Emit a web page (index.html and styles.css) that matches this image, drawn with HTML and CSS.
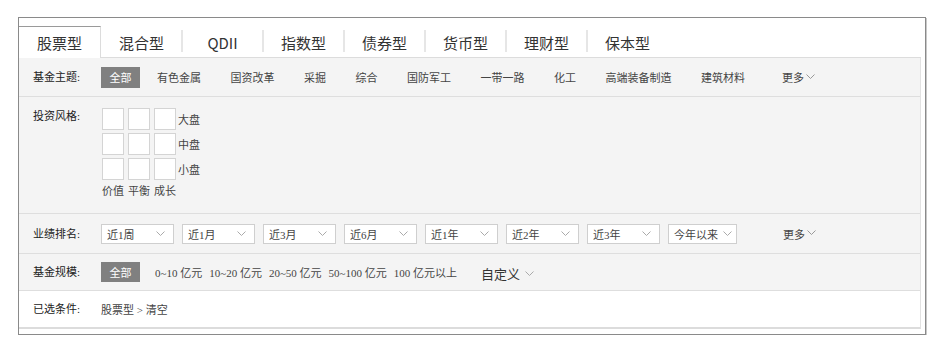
FILE: index.html
```html
<!DOCTYPE html>
<html lang="zh-CN">
<head>
<meta charset="utf-8">
<title>基金筛选</title>
<link rel="stylesheet" href="styles.css">
</head>
<body>
<div class="frame">
  <div class="tabs">
    <div class="tab active">股票型</div>
    <div class="tab">混合型</div>
    <div class="tab sep">QDII</div>
    <div class="tab sep">指数型</div>
    <div class="tab sep">债券型</div>
    <div class="tab sep">货币型</div>
    <div class="tab sep">理财型</div>
    <div class="tab sep">保本型</div>
    <div class="tab-fill"></div>
  </div>
  <div class="panel">
    <div class="row row-theme">
      <div class="label">基金主题:</div>
      <div class="opts">
        <span class="badge">全部</span>
        <span class="opt">有色金属</span>
        <span class="opt">国资改革</span>
        <span class="opt">采掘</span>
        <span class="opt">综合</span>
        <span class="opt">国防军工</span>
        <span class="opt">一带一路</span>
        <span class="opt">化工</span>
        <span class="opt">高端装备制造</span>
        <span class="opt">建筑材料</span>
        <span class="opt more">更多<svg class="chev" viewBox="0 0 9 5" width="9" height="5"><polyline points="0.5,0.5 4.5,4.5 8.5,0.5" fill="none" stroke="#999"/></svg></span>
      </div>
    </div>
    <div class="row row-style">
      <div class="label">投资风格:</div>
      <div class="style-grid">
        <span class="cell"></span><span class="cell"></span><span class="cell"></span><span class="cap">大盘</span>
        <span class="cell"></span><span class="cell"></span><span class="cell"></span><span class="cap">中盘</span>
        <span class="cell"></span><span class="cell"></span><span class="cell"></span><span class="cap">小盘</span>
        <span class="foot">价值</span><span class="foot">平衡</span><span class="foot">成长</span>
      </div>
    </div>
    <div class="row row-rank">
      <div class="label">业绩排名:</div>
      <div class="opts">
        <span class="select">近1周<svg class="chev" viewBox="0 0 9 5" width="9" height="5"><polyline points="0.5,0.5 4.5,4.5 8.5,0.5" fill="none" stroke="#aaa"/></svg></span>
        <span class="select">近1月<svg class="chev" viewBox="0 0 9 5" width="9" height="5"><polyline points="0.5,0.5 4.5,4.5 8.5,0.5" fill="none" stroke="#aaa"/></svg></span>
        <span class="select">近3月<svg class="chev" viewBox="0 0 9 5" width="9" height="5"><polyline points="0.5,0.5 4.5,4.5 8.5,0.5" fill="none" stroke="#aaa"/></svg></span>
        <span class="select">近6月<svg class="chev" viewBox="0 0 9 5" width="9" height="5"><polyline points="0.5,0.5 4.5,4.5 8.5,0.5" fill="none" stroke="#aaa"/></svg></span>
        <span class="select">近1年<svg class="chev" viewBox="0 0 9 5" width="9" height="5"><polyline points="0.5,0.5 4.5,4.5 8.5,0.5" fill="none" stroke="#aaa"/></svg></span>
        <span class="select">近2年<svg class="chev" viewBox="0 0 9 5" width="9" height="5"><polyline points="0.5,0.5 4.5,4.5 8.5,0.5" fill="none" stroke="#aaa"/></svg></span>
        <span class="select">近3年<svg class="chev" viewBox="0 0 9 5" width="9" height="5"><polyline points="0.5,0.5 4.5,4.5 8.5,0.5" fill="none" stroke="#aaa"/></svg></span>
        <span class="select narrow">今年以来<svg class="chev" viewBox="0 0 9 5" width="9" height="5"><polyline points="0.5,0.5 4.5,4.5 8.5,0.5" fill="none" stroke="#aaa"/></svg></span>
        <span class="rank-more">更多<svg class="chev" viewBox="0 0 9 5" width="9" height="5"><polyline points="0.5,0.5 4.5,4.5 8.5,0.5" fill="none" stroke="#999"/></svg></span>
      </div>
    </div>
    <div class="row row-size">
      <div class="label">基金规模:</div>
      <div class="opts">
        <span class="badge badge-size">全部</span>
        <span class="size-opt">0~10 亿元</span>
        <span class="size-opt">10~20 亿元</span>
        <span class="size-opt">20~50 亿元</span>
        <span class="size-opt">50~100 亿元</span>
        <span class="size-opt">100 亿元以上</span>
        <span class="custom">自定义<svg class="chev" viewBox="0 0 9 5" width="9" height="5"><polyline points="0.5,0.5 4.5,4.5 8.5,0.5" fill="none" stroke="#aaa"/></svg></span>
      </div>
    </div>
    <div class="row row-sel">
      <div class="label">已选条件:</div>
      <div class="opts sel">股票型 &gt; 清空</div>
    </div>
  </div>
</div>
</body>
</html>
```

FILE: styles.css
```css
* { box-sizing: border-box; }

body {
  margin: 0;
  background: #fff;
  font-family: "Liberation Serif", "Noto Sans CJK SC", serif;
  color: #333;
}

.frame {
  margin: 17px 0 0 18px;
  width: 908px;
  height: 318px;
  border: 1px solid #8a8a8a;
  box-shadow: 1px 1px 0 #c8c8c8;
  background: #fff;
}

.tabs {
  display: flex;
  width: 902px;
  height: 40px;
  padding-top: 8px;
}

.tab {
  position: relative;
  width: 81px;
  flex: none;
  display: flex;
  align-items: center;
  justify-content: center;
  padding-top: 2px;
  font-family: "Noto Sans CJK SC", sans-serif;
  font-size: 15px;
  color: #333;
  border-bottom: 1px solid #dcdcdc;
}

.tab.active {
  width: 82px;
  border-bottom: 0;
  border-top: 1px solid #9a9a9a;
  border-right: 1px solid #dcdcdc;
  padding-top: 0;
}

.tab.sep::before {
  content: "";
  position: absolute;
  left: -1px;
  top: 4px;
  bottom: 5px;
  width: 2px;
  background: #e6e6e6;
}

.tab-fill {
  flex: 1;
  border-bottom: 1px solid #dcdcdc;
}

.panel {
  width: 902px;
  border-right: 1px solid #e2e2e2;
  border-bottom: 2px solid #dcdcdc;
}

.row {
  display: flex;
  align-items: center;
  padding-left: 14px;
  background: #f4f4f4;
  border-bottom: 1px solid #dedede;
}

.row-theme { height: 39px; }
.row-style { height: 117px; align-items: flex-start; padding-top: 11px; }
.row-rank { height: 40px; }
.row-size { height: 37px; }
.row-sel { height: 36px; background: #fff; border-bottom: 0; }

.label {
  width: 68px;
  flex: none;
  font-size: 11px;
  line-height: 16px;
  color: #222;
}

.opts {
  display: flex;
  align-items: center;
  font-size: 11px;
  color: #444;
  white-space: nowrap;
}

.badge {
  width: 39px;
  height: 21px;
  background: #808080;
  color: #fff;
  display: flex;
  align-items: center;
  justify-content: center;
  margin-right: 17px;
}

.badge-size {
  height: 20px;
  margin-right: 15px;
}

.opt + .opt { margin-left: 29.5px; }
.opt.more { margin-left: 37px; display: flex; align-items: center; }
.more .chev { margin-left: 2px; margin-top: -2px; }

.chev { display: block; flex: none; }

.style-grid {
  display: grid;
  grid-template-columns: 22px 22px 22px auto;
  column-gap: 4px;
  row-gap: 3px;
  align-items: center;
  margin-left: 1px;
  font-size: 11px;
  color: #444;
}

.cell {
  width: 22px;
  height: 22px;
  background: #fff;
  border: 1px solid #d4d4d4;
}

.cap { margin-left: -2px; }

.foot {
  line-height: 13px;
  margin-top: 2px;
  white-space: nowrap;
}

.select {
  width: 73px;
  height: 20px;
  flex: none;
  display: flex;
  align-items: center;
  justify-content: space-between;
  padding: 0 8px 0 5px;
  margin-right: 8px;
  border: 1px solid #cfcfcf;
  background: #fff;
}

.select.narrow {
  width: 69px;
  padding-right: 4px;
  margin-right: 0;
}

.rank-more {
  margin-left: 46px;
  display: flex;
  align-items: center;
}
.rank-more .chev { margin-left: 2px; margin-top: -2px; }

.size-opt + .size-opt { margin-left: 7px; }

.custom {
  margin-left: 24px;
  font-size: 13px;
  color: #333;
  display: flex;
  align-items: center;
  padding-top: 3px;
}
.custom .chev { margin-left: 5px; }

.sel { color: #444; }
```
